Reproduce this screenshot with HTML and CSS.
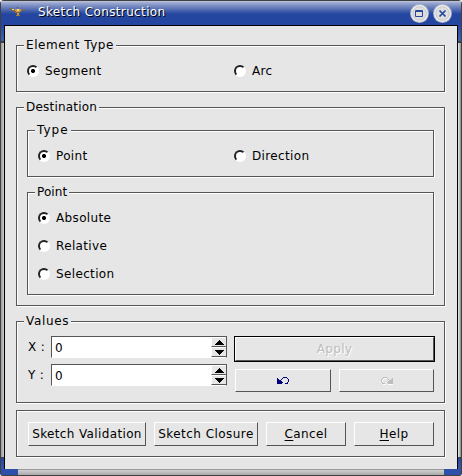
FILE: index.html
```html
<!DOCTYPE html>
<html lang="en">
<head>
<meta charset="utf-8">
<title>Sketch Construction</title>
<link rel="stylesheet" href="styles.css">
</head>
<body>
<div class="window">
  <header class="titlebar">
    <svg class="app-icon" width="15" height="10" viewBox="0 0 15 10" shape-rendering="crispEdges"><path fill="#8c6b34" d="M0 1h2v1h2v1h1V2h6v1h2V2h2v1h-2v1h-2v1h-1v1H9v1H7V6H5V5H4V4H2V3H0z"/><path fill="#c99a3e" d="M5 2h6v2h-1v1H6V4H5zM7 6h2v2H7z"/><path fill="#f0d88a" d="M7 2h2v2H7zM2 2h2v1H2z"/><path fill="#6a5020" d="M7 0h1v1H7z"/><path fill="#a07a35" d="M6 8h4v1H6z"/></svg>
    <span class="title">Sketch Construction</span>
    <svg class="control" width="19" height="19" viewBox="0 0 19 19"><circle cx="9.5" cy="9.5" r="9.4" fill="#b4bace"/><circle cx="9.5" cy="9.5" r="8.4" fill="#f0f0f0"/><circle cx="9.5" cy="9.5" r="6.8" fill="#dedede" stroke="#bcbcbc" stroke-width=".8"/><path fill="none" stroke="#2446a0" d="M5.500 6.500h7v6h-7zM6 7.500h7"/></svg>
    <svg class="control" width="19" height="19" viewBox="0 0 19 19"><circle cx="9.5" cy="9.5" r="9.4" fill="#b4bace"/><circle cx="9.5" cy="9.5" r="8.4" fill="#f0f0f0"/><circle cx="9.5" cy="9.5" r="6.8" fill="#dedede" stroke="#bcbcbc" stroke-width=".8"/><path fill="none" stroke="#2446a0" stroke-width="1.7" d="M6.500 6.500l6 6M12.500 6.500l-6 6"/></svg>
  </header>
  <main class="client">
    <fieldset class="group element">
      <legend>Element Type</legend>
      <label class="radio on"><i></i><span>Segment</span></label>
      <label class="radio"><i></i><span>Arc</span></label>
    </fieldset>
    <fieldset class="group destination">
      <legend>Destination</legend>
      <fieldset class="group type">
        <legend>Type</legend>
        <label class="radio on"><i></i><span>Point</span></label>
        <label class="radio"><i></i><span>Direction</span></label>
      </fieldset>
      <fieldset class="group point">
        <legend>Point</legend>
        <label class="radio on"><i></i><span>Absolute</span></label>
        <label class="radio"><i></i><span>Relative</span></label>
        <label class="radio"><i></i><span>Selection</span></label>
      </fieldset>
    </fieldset>
    <fieldset class="group values">
      <legend>Values</legend>
      <div class="coords">
        <div class="coord"><span class="name">X :</span><div class="spin"><span>0</span><div class="steps"><b><svg width="9" height="5" viewBox="0 0 9 5" shape-rendering="crispEdges"><path d="M4 0h1v1h1v1h1v1h1v1h1v1H0V4h1V3h1V2h1V1h1z"/></svg></b><b><svg width="9" height="5" viewBox="0 0 9 5" shape-rendering="crispEdges"><path d="M0 0h9v1H8v1H7v1H6v1H5v1H4V4H3V3H2V2H1V1H0z"/></svg></b></div></div></div>
        <div class="coord"><span class="name">Y :</span><div class="spin"><span>0</span><div class="steps"><b><svg width="9" height="5" viewBox="0 0 9 5" shape-rendering="crispEdges"><path d="M4 0h1v1h1v1h1v1h1v1h1v1H0V4h1V3h1V2h1V1h1z"/></svg></b><b><svg width="9" height="5" viewBox="0 0 9 5" shape-rendering="crispEdges"><path d="M0 0h9v1H8v1H7v1H6v1H5v1H4V4H3V3H2V2H1V1H0z"/></svg></b></div></div></div>
      </div>
      <div class="actions">
        <div class="default"><button class="btn apply">Apply</button></div>
        <div class="history">
          <button class="btn undo"><svg width="13" height="8" viewBox="0 0 13 8" shape-rendering="crispEdges"><path fill="#000080" d="M6 0h4v1H6zM5 1h1v1H5zM10 1h1v1h-1zM4 2h1v1H4zM11 2h1v3h-1zM10 5h1v1h-1zM8 6h3v1H8zM0 1h1v1h1v1h2v1h1v1h1v1H5v1H0z"/></svg></button>
          <button class="btn redo"><svg width="14" height="8" viewBox="0 0 14 8" shape-rendering="crispEdges"><path fill="#fff" d="M4 1h4v1H4zM8 2h1v1H8zM3 2h1v1H3zM9 3h1v1H9zM2 3h1v3H2zM3 6h1v1H3zM3 7h3v1H3zM13 2v6H8V6h1V5h1V4h2V3h1V2z"/><path fill="#bebebe" d="M3 0h4v1H3zM7 1h1v1H7zM2 1h1v1H2zM8 2h1v1H8zM1 2h1v3H1zM2 5h1v1H2zM2 6h3v1H2zM13 1v6H8V6H7V5h1V4h1V3h2V2h1V1z"/></svg></button>
        </div>
      </div>
    </fieldset>
    <div class="group footer">
      <button class="btn validation">Sketch Validation</button>
      <button class="btn closure">Sketch Closure</button>
      <button class="btn"><u>C</u>ancel</button>
      <button class="btn"><u>H</u>elp</button>
    </div>
  </main>
  <div class="bottom"></div>
</div>
</body>
</html>
```
FILE: styles.css
```css
* { box-sizing: border-box; }
body { margin: 0; background: #fff; font: 12px/16px "DejaVu Sans", sans-serif; letter-spacing: .36px; color: #000; }
.window {
  width: 462px; height: 476px; padding: 1px 1px 0 1px; display: flex; flex-direction: column;
  border-radius: 4px 4px 3px 3px; overflow: hidden;
  background:
    linear-gradient(#404040, #404040) 0 0 / 462px 1px no-repeat,
    linear-gradient(#2446a0, #4060b4 16px, #404040 16px) 1px 25px / 460px 18px no-repeat,
    linear-gradient(#404040 1px, #2446a0 1px, #4060b4) 1px 457px / 460px 18px no-repeat,
    linear-gradient(90deg, #404040 1px, #999 1px, #ccc 4px, transparent 4px, transparent 458px, #eee 458px, #888 461px, #404040 461px);
}
.titlebar {
  height: 24px; flex: none; display: flex; align-items: center; padding: 0 9px 0 9px;
  background: linear-gradient(#c0c8df 0, #9aa8cf 2px, #5971b4 8px, #2446a0 13px, #2446a0 24px);
}
.app-icon { margin: 0 13px 2px 0; }
.title { flex: 1; padding-bottom: 2px; color: #fff; text-shadow: 1px 1px 0 #000; white-space: nowrap; }
.control { margin-left: 4px; }
.client {
  width: 454px; height: 444px; flex: none; margin-left: 3px; padding: 10px 11px 0;
  border: 1px solid #000; border-bottom: 0; background: #e6e6e6;
}
.bottom {
  height: 7px; flex: none; border-bottom: 1px solid #404040;
  background: linear-gradient(90deg, #2f50a8 17px, transparent 17px, transparent 443px, #2f50a8 443px), linear-gradient(#999 1px, #d0d0d0 1px, #aaa);
}
.group {
  position: relative; min-width: 0; margin: 0; padding: 0; width: 429px;
  border: 1px solid #555; box-shadow: 1px 1px 0 #fff, inset 1px 1px 0 #fff;
}
.group > legend {
  position: absolute; left: 7px; top: -9px; height: 17px; padding: 0 2px; background: #e6e6e6; white-space: nowrap;
}
.element > legend { letter-spacing: .58px; }
.destination > legend { letter-spacing: .2px; }
.type > legend { letter-spacing: 1px; }
.point > legend { letter-spacing: .1px; }
.values > legend { letter-spacing: .65px; }
.element { height: 47px; margin-top: 9px; display: flex; padding: 17px 0 0 10px; }
.element .radio:first-of-type { width: 207px; }
.destination { height: 199px; margin-top: 15px; padding: 22px 10px 0; }
.type { width: 407px; height: 47px; display: flex; padding: 17px 0 0 10px; }
.type .radio:first-of-type { width: 196px; }
.point { width: 407px; height: 103px; margin-top: 15px; padding: 17px 0 0 10px; display: flex; flex-direction: column; gap: 12px; }
.radio { display: flex; align-items: center; height: 16px; }
.radio i {
  width: 12px; height: 12px; margin-right: 6px; border-radius: 50%; border: 2px solid #fff;
  border-top-color: #222; border-left-color: #222; background: #fff;
}
.radio.on i { background: radial-gradient(circle, #000 0 1.8px, #fff 2.3px); }
.values { height: 82px; margin-top: 15px; padding: 14px 9px 0 11px; display: flex; justify-content: space-between; }
.coords { display: flex; flex-direction: column; gap: 6px; }
.coord { display: flex; }
.name { width: 23px; line-height: 22px; white-space: nowrap; }
.spin {
  width: 176px; height: 22px; display: flex; justify-content: space-between; padding-left: 3px; line-height: 22px;
  background: #fff; border: 1px solid #555; border-bottom-color: #fff;
}
.steps { width: 15px; display: grid; grid-template-rows: 10px 10px; }
.steps b { display: flex; align-items: center; justify-content: center; background: #e6e6e6; border: solid #fff; border-width: 1px 0 0 1px; border-bottom: 1px solid #555; }
.actions { width: 201px; }
.default { height: 26px; border: 1px solid #000; }
.btn {
  height: 24px; padding: 0; font: inherit; letter-spacing: .36px; color: #000; background: #e6e6e6; text-align: center; white-space: nowrap;
  border: 1px solid #fff; border-right-color: #555; border-bottom-color: #555; width: 80px;
}
.apply { display: block; width: 199px; color: #bebebe; text-shadow: 1px 1px 0 #fff; }
.history { display: flex; gap: 8px; margin: 7px 1px 0; }
.history .btn { width: 96px; height: 23px; display: flex; align-items: center; justify-content: center; }
.history .redo { width: 95px; }
.footer { height: 47px; margin-top: 7px; padding: 11px 10px 0 11px; display: flex; gap: 8px; }
.footer .validation { width: 118px; }
.footer .closure { width: 104px; letter-spacing: .45px; }
u { text-underline-offset: 2px; }
```
